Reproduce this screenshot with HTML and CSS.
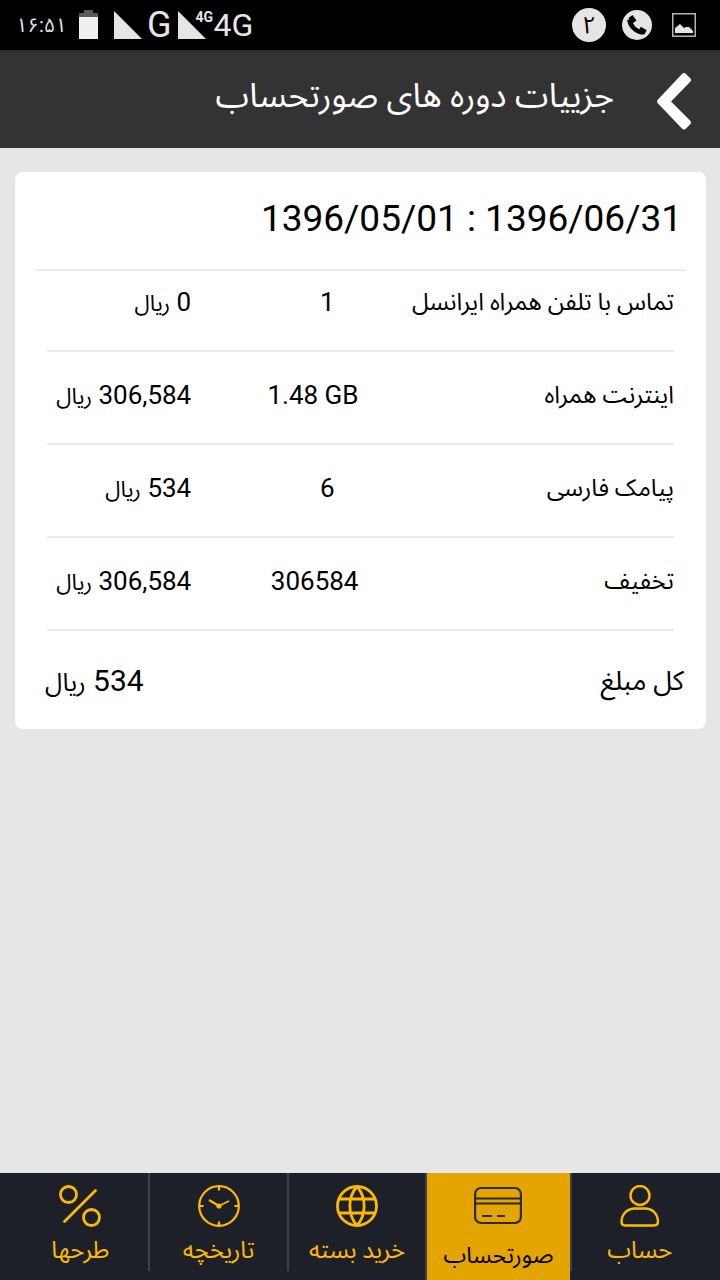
FILE: index.html
```html
<!DOCTYPE html>
<html lang="fa" dir="rtl">
<head>
<meta charset="utf-8">
<meta name="viewport" content="width=device-width, initial-scale=1">
<title>جزییات دوره های صورتحساب</title>
<link rel="stylesheet" href="styles.css">
</head>
<body>
<div class="status" dir="ltr">
  <div class="status-group">
    <time class="clock">۱۶:۵۱</time>
    <svg class="battery" width="19" height="30" viewBox="0 0 19 30" aria-hidden="true"><path fill="#5a5a5a" d="M5 0h9v3h5v5H0V3h5z"/><path fill="#efefef" d="M0 7h19v22H0z"/></svg>
    <div class="signal">
      <svg width="28" height="28" viewBox="0 0 28 28" aria-hidden="true"><path fill="#e5e5e5" d="M0 0l28 28H0z"/></svg>
      <span class="net">G</span>
    </div>
    <div class="signal">
      <svg width="28" height="28" viewBox="0 0 28 28" aria-hidden="true"><path fill="#e5e5e5" d="M0 0l28 28H0z"/></svg>
      <span class="net-small">4G</span>
      <span class="net net-wide">4G</span>
    </div>
  </div>
  <div class="status-group status-notes">
    <span class="count">۲</span>
    <svg width="30" height="30" viewBox="0 0 30 30" aria-hidden="true"><circle cx="15" cy="15" r="15" fill="#e5e5e5"/><path d="M7.500 9.500C8 16 14 22 21 22.500" fill="none" stroke="#000" stroke-width="4.500"/><path d="M8.500 6.500l4 5.500M17.500 19l6 3.500" stroke="#000" stroke-width="5"/></svg>
    <svg width="24" height="24" viewBox="0 0 24 24" aria-hidden="true"><path fill="none" stroke="#b5b5b0" stroke-width="1.500" d="M.75.75h22.500v22.500H.75z"/><path fill="#e5e5e5" d="M3 20v-5l5-4 4 4 2-1h3l4 4v2z"/></svg>
  </div>
</div>
<header class="appbar">
  <button class="back" type="button" aria-label="بازگشت"><svg width="36" height="58" viewBox="0 0 36 58" aria-hidden="true"><path d="M28 1q1 0 2 1l4 4q2 2 0 4L15 29.500l19 19q2 2 0 4l-4 4q-2 2-4 0L2 31.500q-2-2 0-4L26 2q1-1 2-1z" fill="#fff"/></svg></button>
  <h1 class="title">جزییات دوره های صورتحساب</h1>
</header>
<main class="content">
  <section class="card">
    <h2 class="period"><span dir="ltr">1396/05/01 : 1396/06/31</span></h2>
    <table class="bill">
      <tbody>
        <tr><th scope="row">تماس با تلفن همراه ایرانسل</th><td class="qty qty-count">1</td><td>0 <span class="unit">ریال</span></td></tr>
        <tr><th scope="row">اینترنت همراه</th><td class="qty"><span dir="ltr">1.48 GB</span></td><td>306,584 <span class="unit">ریال</span></td></tr>
        <tr><th scope="row">پیامک فارسی</th><td class="qty qty-count">6</td><td>534 <span class="unit">ریال</span></td></tr>
        <tr><th scope="row">تخفیف</th><td class="qty">306584</td><td>306,584 <span class="unit">ریال</span></td></tr>
      </tbody>
    </table>
    <div class="total"><span class="total-label">کل مبلغ</span><span>534 <span class="total-unit">ریال</span></span></div>
  </section>
</main>
<nav class="tabs">
  <a class="tab" href="#account">
    <svg width="42" height="42" viewBox="0 0 42 42" aria-hidden="true"><g fill="none" stroke="#ffba00" stroke-width="2.400"><circle cx="21" cy="10.500" r="9.500"/><path d="M6 40.500q-3.500 0-3.500-4C3 28 9 23.500 16 23.500h10c7 0 12.500 4.500 13 13q0 4-4 4z"/></g></svg>
    <span>حساب</span>
  </a>
  <a class="tab tab-active" href="#bill" aria-current="page">
    <svg width="48" height="42" viewBox="0 0 48 42" aria-hidden="true"><g fill="none" stroke="#2a2a28" stroke-width="2.200"><rect x="1.100" y="3" width="45.800" height="35" rx="6"/><path d="M1 13.500h46M1 18.500h46M8 31h10M23 31h8"/></g></svg>
    <span>صورتحساب</span>
  </a>
  <a class="tab" href="#packages">
    <svg width="42" height="42" viewBox="0 0 42 42" aria-hidden="true"><g fill="none" stroke="#ffba00" stroke-width="2.800"><circle cx="21" cy="21" r="19.500"/><path d="M21 1.500C11.500 12 11.500 30 21 40.500M21 1.500C30.500 12 30.500 30 21 40.500M3 14h36M3 28h36"/></g></svg>
    <span>خرید بسته</span>
  </a>
  <a class="tab" href="#history">
    <svg width="42" height="42" viewBox="0 0 42 42" aria-hidden="true"><g fill="none" stroke="#ffba00" stroke-width="2.200"><circle cx="21" cy="21" r="19.800"/><path d="M21 1v4.500M21 36.500V41M1 21h4.500M36.500 21H41"/><path d="M11 15l10 6"/><path stroke-width="1.500" d="M21 21l10-5"/></g><circle cx="21" cy="21" r="2.600" fill="#ffba00"/></svg>
    <span>تاریخچه</span>
  </a>
  <a class="tab" href="#plans">
    <svg width="42" height="42" viewBox="0 0 42 42" aria-hidden="true"><g fill="none" stroke="#ffba00" stroke-width="2.800" stroke-linecap="round"><circle cx="9.500" cy="9.500" r="8"/><circle cx="32.500" cy="32.500" r="8"/><path d="M36.500 5.500l-31 31"/></g></svg>
    <span>طرحها</span>
  </a>
</nav>
</body>
</html>
```
FILE: styles.css
```css
* { box-sizing: border-box; }

body {
  margin: 0;
  min-height: 100vh;
  display: flex;
  flex-direction: column;
  background: #e6e6e6;
  color: #000;
  font-family: Roboto, "Noto Sans Arabic", "DejaVu Sans Condensed", "DejaVu Sans", sans-serif;
}

svg { display: block; flex: none; }

.status {
  display: flex;
  justify-content: space-between;
  height: 50px;
  padding: 0 24px 0 16px;
  background: #000;
  color: #e5e5e5;
}
.status-group { display: flex; align-items: center; }
.clock { width: 50px; font-size: 20px; line-height: 28px; }
.battery { margin: 0 16px 0 13px; }
.signal { display: flex; align-items: center; position: relative; margin-right: 6px; }
.net {
  margin-left: 5px;
  font-size: 36px;
  line-height: 40px;
}
.net-wide { margin-left: 8px; font-size: 32px; }
.net-small {
  position: absolute;
  left: 18px;
  top: 4px;
  font-size: 14px;
  font-weight: 700;
  line-height: 16px;
}
.status-notes { gap: 20px; }
.count {
  width: 34px;
  height: 34px;
  margin-right: -4px;
  border-radius: 50%;
  background: #e5e5e5;
  color: #000;
  font-size: 24px;
  line-height: 34px;
  text-align: center;
}

.appbar {
  display: flex;
  align-items: center;
  gap: 42px;
  height: 98px;
  padding: 0 28px 0 24px;
  background: #333;
  box-shadow: inset 0 3px 3px -1px #2b2b2b;
}
.back { padding: 4px 0 0; border: 0; background: none; }
.title {
  margin: 0;
  padding-bottom: 8px;
  color: #fff;
  font-size: 34px;
  font-weight: 400;
  line-height: 48px;
}

.content { flex: 1; padding: 24px 14px 24px 15px; }
.card { padding: 0 20px; border-radius: 8px; background: #fff; }
.period {
  margin: 0;
  padding: 24px 4px 27px;
  border-bottom: 2px solid #ebebeb;
  font-size: 37px;
  font-weight: 400;
  line-height: 46px;
}
.bill {
  width: calc(100% - 24px);
  margin: 0 12px;
  border-collapse: collapse;
  table-layout: fixed;
  font-size: 26px;
  line-height: 38px;
}
.bill th, .bill td {
  padding: 24px 0 29px;
  border-bottom: 2px solid #ebebeb;
  font-weight: 400;
  text-align: right;
  white-space: nowrap;
}
.bill tr:first-child > * { padding-top: 12px; }
.bill th { width: 50%; font-size: 24px; }
.bill .qty { width: 27%; padding-right: 2px; }
.bill .qty-count { padding-right: 26px; }
.unit { font-size: 22px; line-height: 22px; }

.total {
  display: flex;
  justify-content: space-between;
  padding: 28px 2px 26px 10px;
  font-size: 30px;
  line-height: 44px;
}
.total-label { font-size: 27px; }
.total-unit { font-size: 25px; line-height: 25px; }

.tabs {
  display: flex;
  height: 107px;
  padding: 0 12px;
  background: #1e2029;
}
.tab {
  flex: 138 1 0;
  display: flex;
  flex-direction: column;
  align-items: center;
  gap: 6px;
  height: 98px;
  padding-top: 12px;
  border-left: 2px solid #3f424b;
  color: #ffba00;
  font-size: 24px;
  line-height: 34px;
  text-decoration: none;
  white-space: nowrap;
}
.tab:last-child { border-left: 0; }
.tab-active {
  flex-grow: 144;
  gap: 12px;
  height: 107px;
  background: #e5a500;
  color: #000;
  font-size: 23px;
}
```
